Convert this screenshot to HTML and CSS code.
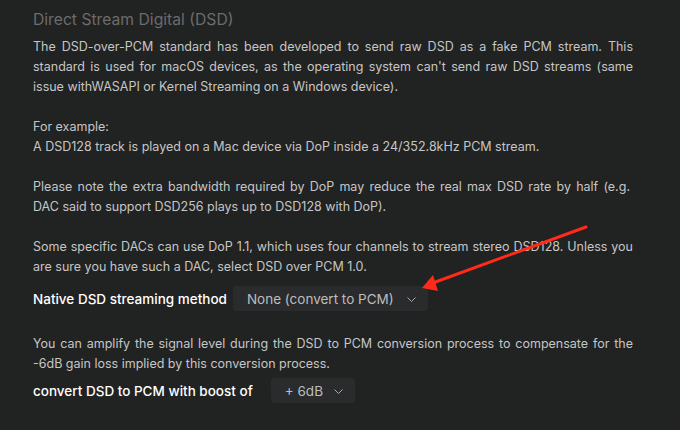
FILE: index.html
```html
<!DOCTYPE html>
<html lang="en">
<head>
<meta charset="utf-8">
<title>Direct Stream Digital (DSD)</title>
<link rel="stylesheet" href="styles.css">
</head>
<body>
<main class="panel">
  <h2 class="title">Direct Stream Digital (DSD)</h2>
  <p class="text">The DSD-over-PCM standard has been developed to send raw DSD as a fake PCM stream. This standard is used for macOS devices, as the operating system can't send raw DSD streams (same issue withWASAPI or Kernel Streaming on a Windows device).</p>
  <p class="text">For example:<br>A DSD128 track is played on a Mac device via DoP inside a 24/352.8kHz PCM stream.</p>
  <p class="text text-note">Please note the extra bandwidth required by DoP may reduce the real max DSD rate by half (e.g. DAC said to support DSD256 plays up to DSD128 with DoP).</p>
  <p class="text">Some specific DACs can use DoP 1.1, which uses four channels to stream stereo DSD128. Unless you are sure you have such a DAC, select DSD over PCM 1.0.</p>
  <div class="row row-method">
    <span class="label label-method">Native DSD streaming method</span>
    <div class="select select-method">
      <span class="select-value">None (convert to PCM)</span>
      <svg class="chev" width="9" height="5" viewBox="0 0 9 5"><path d="M0.5 0.5 L4.5 4.5 L8.5 0.5" fill="none" stroke="#a8a8a8" stroke-width="1"/></svg>
    </div>
  </div>
  <p class="text text-amp">You can amplify the signal level during the DSD to PCM conversion process to compensate for the -6dB gain loss implied by this conversion process.</p>
  <div class="row row-boost">
    <span class="label label-boost">convert DSD to PCM with boost of</span>
    <div class="select select-boost">
      <span class="select-value">+ 6dB</span>
      <svg class="chev" width="9" height="5" viewBox="0 0 9 5"><path d="M0.5 0.5 L4.5 4.5 L8.5 0.5" fill="none" stroke="#a8a8a8" stroke-width="1"/></svg>
    </div>
  </div>
  <svg class="arrow" width="680" height="430" viewBox="0 0 680 430">
    <line x1="586" y1="227" x2="430" y2="284" stroke="#ff2a1a" stroke-width="3" stroke-linecap="round"/>
    <polygon points="422,288 433,275 438,291" fill="#ff2a1a"/>
  </svg>
</main>
</body>
</html>
```
FILE: styles.css
```css
html, body {
  margin: 0;
  padding: 0;
  background: #212222;
}
body {
  width: 680px;
  height: 430px;
  overflow: hidden;
  font-family: Inter, "Noto Sans", "DejaVu Sans", sans-serif;
}
.panel {
  position: relative;
  width: 600px;
  height: 430px;
  padding: 10px 0 0 33px;
  box-sizing: content-box;
}
.title {
  margin: 0 0 7px;
  font-size: 15.7px;
  line-height: 20px;
  font-weight: 400;
  color: #6c6c6c;
}
.text {
  margin: 0 0 20px;
  font-size: 12.5px;
  line-height: 20px;
  color: #c6c6c6;
  text-align: justify;
}
.text-note {
  margin-right: 3px;
}
.row {
  display: flex;
  align-items: center;
  height: 25px;
}
.row-method {
  margin-top: -11px;
}
.label {
  font-size: 13.5px;
  font-weight: 500;
  color: #ffffff;
}
.label-method { margin-right: 6px; }
.label-boost { margin-right: 18px; }
.select {
  display: inline-flex;
  align-items: center;
  height: 25px;
  padding: 0 12px 0 14px;
  background: #2a2b2c;
  border-radius: 4px;
  font-size: 13.5px;
  color: #bdbdbd;
  gap: 13px;
}
.select-boost { gap: 11px; }
.chev { display: block; margin-top: 1px; }
.text-amp {
  margin-top: 23px;
  margin-bottom: 4px;
}
.arrow {
  position: absolute;
  left: 0;
  top: 0;
  pointer-events: none;
}
```
